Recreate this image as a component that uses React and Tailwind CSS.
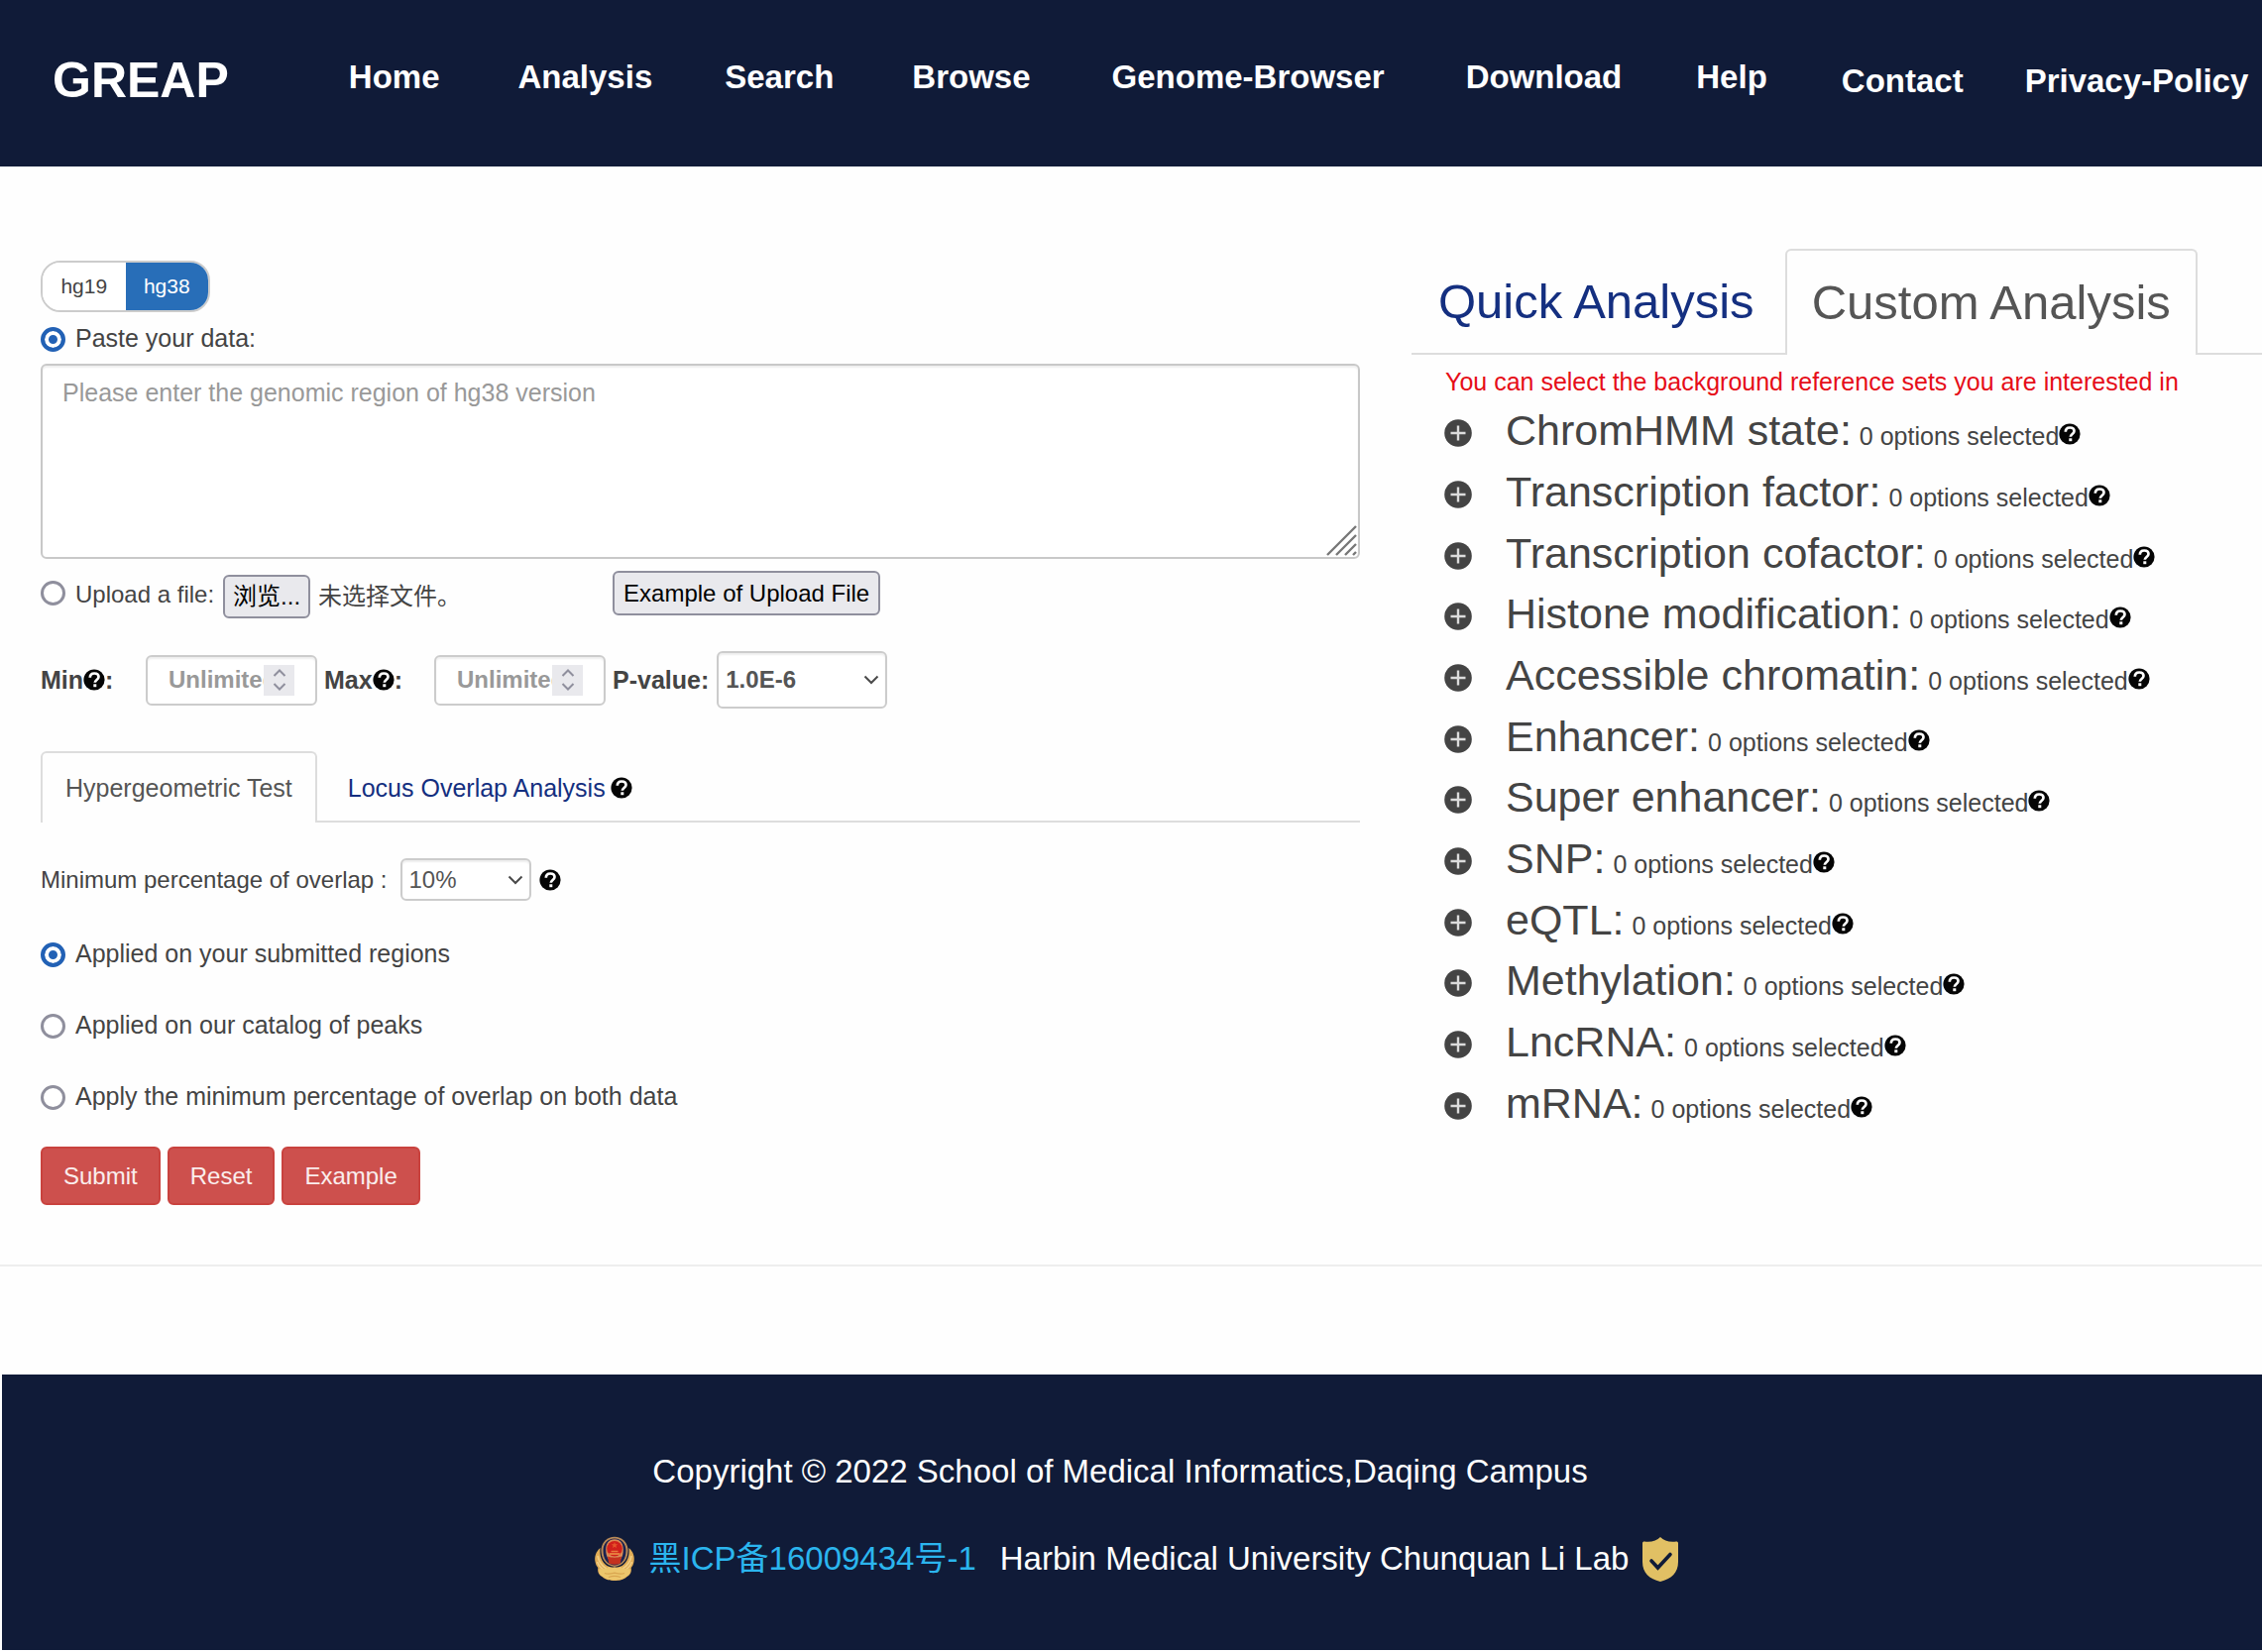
import React from "react";

const primaryNav = [
  ["Home", "ml-[121px]"],
  ["Analysis", "ml-[79px]"],
  ["Search", "ml-[73px]"],
  ["Browse", "ml-[79px]"],
  ["Genome-Browser", "ml-[82px]"],
  ["Download", "ml-[82px]"],
  ["Help", "ml-[75px]"],
];

const options = [
  "ChromHMM state:",
  "Transcription factor:",
  "Transcription cofactor:",
  "Histone modification:",
  "Accessible chromatin:",
  "Enhancer:",
  "Super enhancer:",
  "SNP:",
  "eQTL:",
  "Methylation:",
  "LncRNA:",
  "mRNA:",
];

function HelpIcon({ className = "" }) {
  return (
    <svg viewBox="0 0 22 22" className={"size-[22px] shrink-0 " + className} aria-label="Help" role="img">
      <circle cx="11" cy="11" r="10.6" fill="#050505" />
      <path
        d="M6.800 8.800C6.800 5.800 8.600 4.500 11.200 4.500c2.500 0 4.300 1.300 4.300 3.500 0 2.900-3.700 3-3.700 5.800"
        fill="none"
        stroke="#fff"
        strokeWidth="2.700"
      />
      <rect x="10.300" y="15.300" width="3" height="2.900" fill="#fff" />
    </svg>
  );
}

function PlusIcon() {
  return (
    <svg viewBox="0 0 28 28" className="size-7 shrink-0" aria-hidden="true">
      <circle cx="14" cy="14" r="13.8" fill="#444" />
      <path d="M14 6.500v15M6.500 14h15" stroke="#dcdcdc" strokeWidth="2.400" />
    </svg>
  );
}

function Radio({ id, name, checked, children, className = "", labelClass = "pb-0.5 leading-[34px]" }) {
  return (
    <div className={"flex items-center gap-2.5 " + className}>
      <input
        id={id}
        name={name}
        type="radio"
        defaultChecked={checked}
        className="size-[25px] shrink-0 appearance-none rounded-full border-[3px] border-[#8f8f9d] bg-white checked:border-[4px] checked:border-[#2261b5] checked:bg-[#2261b5] checked:shadow-[inset_0_0_0_4px_white]"
      />
      <label htmlFor={id} className={labelClass}>
        {children}
      </label>
    </div>
  );
}

function Select({ id, children, className }) {
  return (
    <div className="relative">
      <select
        id={id}
        className={
          "block appearance-none rounded-md border-2 border-[#ccc] bg-white pl-[7px] text-2xl text-[#555] shadow-[inset_0_2px_2px_rgba(0,0,0,0.07)] " +
          className
        }
      >
        {children}
      </select>
      <svg
        viewBox="0 0 16 10"
        className="pointer-events-none absolute top-1/2 right-2 h-2.5 w-4 -translate-y-1/2"
        fill="none"
        stroke="#4a4a4a"
        strokeWidth="2"
        aria-hidden="true"
      >
        <path d="M1.500 1.500 8 8l6.500-6.500" />
      </svg>
    </div>
  );
}

function NumberField({ id }) {
  return (
    <div className="flex h-[51px] w-[173px] items-center rounded-md border-2 border-[#ccc] bg-white pl-[21px] shadow-[inset_0_2px_2px_rgba(0,0,0,0.07)]">
      <input
        id={id}
        type="text"
        inputMode="numeric"
        placeholder="Unlimited"
        className="w-24 min-w-0 text-2xl font-bold text-[#555] outline-none placeholder:text-[#999]"
      />
      <span className="flex h-[31px] w-[31px] items-center justify-center bg-[#e9e9ed]">
        <svg viewBox="0 0 14 24" className="h-6 w-3.5" fill="none" stroke="#8f8f9d" strokeWidth="2" aria-hidden="true">
          <path d="M1.500 8 7 2.500 12.500 8M1.500 16 7 21.500 12.500 16" />
        </svg>
      </span>
    </div>
  );
}

function Emblem() {
  return (
    <svg viewBox="0 0 42 46" className="h-[46px] w-[42px] shrink-0" role="img" aria-label="Police badge">
      <path d="M21 .8C13.500.800 8.500 6 7.500 13c-.5 9 4 17 13.500 18 9.500-1 14-9 13.500-18C33.500 6 28.500.800 21 .8Z" fill="#b98a58" />
      <path d="M21 2.600c-7 0-11.500 5-11.500 12 0 9 4 14 11.500 15 7.500-1 11.500-6 11.500-15 0-7-4.500-12-11.500-12Z" fill="#1b2350" />
      <path
        d="M6.500 12C2 16 .5 21 1.500 26c.4 2.500 1.500 4.500 2.800 6-.8 4 1 7.500 4.200 9 3.500 3.500 8 4 12.500 4s9-.5 12.500-4c3.200-1.500 5-5 4.200-9 1.300-1.500 2.400-3.500 2.800-6 1-5-.5-10-5-14 .8 8-1.500 14-7 18-4.500 2-10.500 2-15 0-5.500-4-7.800-10-7-18Z"
        fill="#e0ac56"
      />
      <path d="M21 3.200c-6 0-8.800 4.300-8.800 10.300 0 7.500 3 12.500 8.800 13.700 5.800-1.200 8.800-6.200 8.800-13.700 0-6-2.800-10.300-8.800-10.300Z" fill="#d98a55" />
      <circle cx="21" cy="12.800" r="7.800" fill="#d1201b" />
      <path d="m21 6 .9 2.300h2.300l-1.800 1.500.7 2.300-2.100-1.400-2.100 1.400.7-2.300-1.800-1.500h2.300Z" fill="#e5552a" />
      <path d="M15.500 17h11v2h-11zM17.500 14.800h7v1.400h-7z" fill="#e77b3c" />
      <path d="M14 20.500c4 1.600 10 1.600 14 0l-1.200 7c-4 1.600-7.600 1.600-11.600 0Z" fill="#c4321f" />
      <path
        d="M4 20c1 6 4 10 9 13M38 20c-1 6-4 10-9 13M3.500 26c2 5 4.500 7.500 8.500 9M38.500 26c-2 5-4.500 7.500-8.500 9"
        fill="none"
        stroke="#f2cf85"
        strokeWidth="1.600"
      />
      <path
        d="M5.500 33c4 .8 7 .2 9.500-2 2 1.600 4 1.600 6 .6 2 1 4 1 6-.6 2.500 2.200 5.500 2.800 9.500 2 .8 4-.8 7-4 8-3 3-7 3.300-11.500 3.300S12.500 44 9.500 41c-3.200-1-4.800-4-4-8Z"
        fill="#ecc66c"
      />
      <path d="M11 37.500c3 1.500 6 .8 10-.3 4 1.100 7 1.800 10 .3M15 41.500c4-1.500 8-1.500 12 0" fill="none" stroke="#d9a650" strokeWidth="1.300" />
    </svg>
  );
}

function Shield() {
  return (
    <svg viewBox="0 0 36 45" className="h-[45px] w-9 shrink-0" role="img" aria-label="Verified">
      <path
        d="M18 0c3.500 3.500 9 5.500 16 4.500 1.300 0 2 .6 2 1.800V25c0 11-7 17.500-18 20C7 42.500 0 36 0 25V6.300C0 5.100.7 4.500 2 4.500 9 5.500 14.500 3.500 18 0Z"
        fill="#e1c064"
      />
      <path d="m9 24 6.500 7L28 17.500" fill="none" stroke="#101b38" strokeWidth="3.600" strokeLinecap="round" />
    </svg>
  );
}

export default function App() {
  const action =
    "h-[59px] rounded-md border-2 border-[#c9423e] bg-[#cd504d] px-[21px] text-2xl text-white/90";
  return (
    <div className="bg-[#fefefe] font-['Liberation_Sans','Noto_Sans_CJK_SC',sans-serif] text-[25px] leading-9 text-[#444]">
      <header className="flex h-42 items-start bg-[#101b38] pl-[53px] text-[33px] leading-10 font-bold whitespace-nowrap text-white">
        <a href="#greap" className="pt-[53px] text-[50px] leading-14">
          GREAP
        </a>
        <nav className="flex pt-[58px]" aria-label="Main">
          {primaryNav.map(([label, margin]) => (
            <a key={label} href={"#" + label} className={margin}>
              {label}
            </a>
          ))}
        </nav>
        <nav className="flex gap-[62px] pt-[62px] pl-[75px]" aria-label="About">
          <a href="#contact">Contact</a>
          <a href="#privacy">Privacy-Policy</a>
        </nav>
      </header>

      <main className="flex items-start justify-between border-b-2 border-[#eee] pb-[60px] pl-[41px]">
        <form className="w-[1331px] pt-[95px]" onSubmit={(e) => e.preventDefault()}>
          <div className="flex h-[52px] w-[171px] overflow-hidden rounded-[20px] border-2 border-[#ccc] text-[21px]">
            <button type="button" className="flex-1 bg-white">
              hg19
            </button>
            <button type="button" className="flex-1 bg-[#286eb8] text-white">
              hg38
            </button>
          </div>

          <Radio id="paste" name="source" checked className="mt-[9px]">
            Paste your data:
          </Radio>
          <div className="relative mt-[7px]">
            <textarea
              aria-label="Genomic regions"
              placeholder="Please enter the genomic region of hg38 version"
              className="block h-[197px] w-full resize-none rounded-md border-2 border-[#c8c8c8] bg-white px-5 py-[9px] shadow-[inset_0_2px_2px_rgba(0,0,0,0.07)] placeholder:text-[#999]"
            />
            <svg
              viewBox="0 0 32 32"
              className="pointer-events-none absolute right-0.5 bottom-0.5 size-8"
              stroke="#777"
              strokeWidth="2.400"
              aria-hidden="true"
            >
              <path d="M1 30 30 1M10 30 30 10M19 30l11-11M27 30l3-3" />
            </svg>
          </div>

          <div className="mt-3 flex items-start">
            <Radio id="upload" name="source" className="pt-1" labelClass="pt-1 text-2xl leading-8">
              Upload a file:
            </Radio>
            <div className="flex items-center pt-1">
              <button
                type="button"
                className="ml-[9px] h-11 w-[88px] rounded-md border-2 border-[#8f8f9d] bg-[#e9e9ed] text-2xl text-black"
              >
                浏览...
              </button>
              <span className="ml-2 w-[297px] text-2xl">未选择文件。</span>
            </div>
            <button
              type="button"
              className="h-[45px] rounded-md border-2 border-[#8f8f9d] bg-[#e9e9ed] px-[9px] text-2xl text-black"
            >
              Example of Upload File
            </button>
          </div>

          <div className="mt-[33px] flex items-center font-bold">
            <label htmlFor="min" className="flex w-[106px] items-center">
              Min
              <HelpIcon />:
            </label>
            <NumberField id="min" />
            <label htmlFor="max" className="ml-[7px] flex w-[111px] items-center">
              Max
              <HelpIcon />:
            </label>
            <NumberField id="max" />
            <label htmlFor="pvalue" className="mr-2 ml-[7px]">
              P-value:
            </label>
            <Select id="pvalue" className="h-[58px] w-[172px] font-bold">
              <option>1.0E-6</option>
            </Select>
          </div>

          <div className="mt-[43px] flex" role="tablist">
            <button
              type="button"
              role="tab"
              className="h-[72px] rounded-t-md border-2 border-b-0 border-[#ddd] px-[23px] text-[#555]"
            >
              Hypergeometric Test
            </button>
            <div className="flex flex-1 items-center gap-[5px] border-b-2 border-[#ddd] pt-1 pl-[31px]">
              <button type="button" role="tab" className="text-[#142f80]">
                Locus Overlap Analysis
              </button>
              <HelpIcon />
            </div>
          </div>

          <div className="mt-9 flex items-center gap-2 text-2xl">
            <label htmlFor="overlap" className="mr-[5px]">
              Minimum percentage of overlap :
            </label>
            <Select id="overlap" className="h-[43px] w-[132px]">
              <option>10%</option>
            </Select>
            <HelpIcon />
          </div>

          <div className="mt-9 flex flex-col gap-9">
            <Radio id="submitted" name="applied" checked>
              Applied on your submitted regions
            </Radio>
            <Radio id="catalog" name="applied">
              Applied on our catalog of peaks
            </Radio>
            <Radio id="both" name="applied">
              Apply the minimum percentage of overlap on both data
            </Radio>
          </div>

          <div className="mt-8 flex gap-[7px]">
            <button type="submit" className={action}>
              Submit
            </button>
            <button type="reset" className={action}>
              Reset
            </button>
            <button type="button" className={action}>
              Example
            </button>
          </div>
        </form>

        <section className="w-[858px] pt-[83px]">
          <div className="flex text-[49px] whitespace-nowrap" role="tablist">
            <div className="border-b-2 border-[#ddd] pr-[31px] pl-[27px]">
              <button type="button" role="tab" className="h-[105px] text-[#142f80]">
                Quick Analysis
              </button>
            </div>
            <button
              type="button"
              role="tab"
              className="h-[107px] rounded-t-md border-2 border-b-0 border-[#ddd] px-[25px] pb-0.5 text-[#555]"
            >
              Custom Analysis
            </button>
            <div className="flex-1 border-b-2 border-[#ddd]" />
          </div>
          <p className="mt-[9px] pl-[34px] text-[#e60d18]">
            You can select the background reference sets you are interested in
          </p>
          <ul className="pl-[33px]">
            {options.map((name) => (
              <li key={name} className="flex h-[62px] items-center nth-[3n]:h-[61px]">
                <button type="button" aria-label={"Expand " + name} className="mr-[34px] pt-1.5">
                  <PlusIcon />
                </button>
                <span className="flex items-baseline gap-2 whitespace-nowrap">
                  <span className="text-[43px] leading-[60px]">{name}</span>
                  <span className="flex items-baseline">
                    0 options selected
                    <HelpIcon />
                  </span>
                </span>
              </li>
            ))}
          </ul>
        </section>
      </main>

      <footer className="mt-[109px] ml-0.5 flex h-[278px] flex-col items-center bg-[#101b38] pt-[78px] text-[33px] leading-10 text-white">
        <p className="mr-6">Copyright © 2022 School of Medical Informatics,Daqing Campus</p>
        <div className="mt-[45px] ml-2 flex items-center gap-3.5">
          <Emblem />
          <a href="#icp" className="text-[#2bb5ee]">
            黑ICP备16009434号-1
          </a>
          <span className="ml-2.5">Harbin Medical University Chunquan Li Lab</span>
          <Shield />
        </div>
      </footer>
    </div>
  );
}
